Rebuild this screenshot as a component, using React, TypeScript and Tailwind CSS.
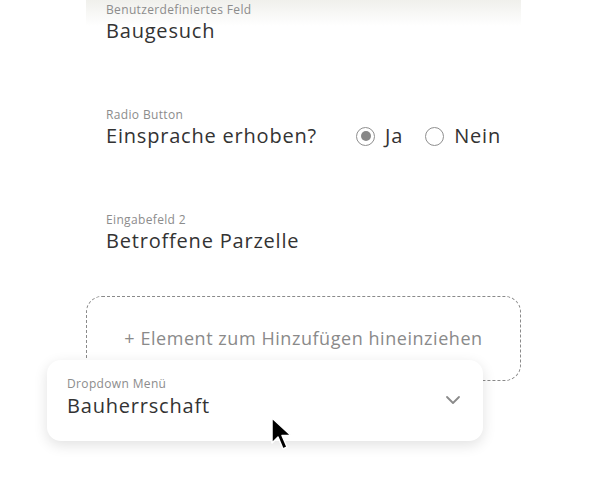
import React from 'react';

const font = { fontFamily: '"Open Sans", "Noto Sans", sans-serif' };

function Field({ label, value, children }: { label: string; value: string; children?: React.ReactNode }) {
  return (
    <div className="px-5">
      <p className="text-[12px] leading-[15px] tracking-[0.35px] text-[#8c8c8c]">{label}</p>
      <div className="flex items-center justify-between">
        <p className="text-[20px] leading-[28px] tracking-[0.8px] text-[#333333]">{value}</p>
        {children}
      </div>
    </div>
  );
}

function Radio({ checked, label }: { checked?: boolean; label: string }) {
  return (
    <div className="flex items-center gap-[10px]">
      <span className="flex h-[19px] w-[19px] items-center justify-center rounded-full border border-[#8f8f8f]">
        {checked && <span className="h-[10px] w-[10px] rounded-full bg-[#888888]" />}
      </span>
      <span className="text-[20px] leading-[28px] tracking-[0.8px] text-[#333333]">{label}</span>
    </div>
  );
}

export default function App() {
  return (
    <div className="relative h-[500px] w-[607px] overflow-hidden bg-white" style={font}>
      <div className="ml-[86px] flex w-[435px] flex-col">
        <div className="h-[105px] bg-[linear-gradient(to_bottom,#f0f0ec,#ffffff_26px)] pt-[2px]">
          <Field label="Benutzerdefiniertes Feld" value="Baugesuch" />
        </div>
        <div className="h-[105px] pt-[2px]">
          <Field label="Radio Button" value="Einsprache erhoben?">
            <div className="flex items-center gap-[22px]">
              <Radio checked label="Ja" />
              <Radio label="Nein" />
            </div>
          </Field>
        </div>
        <div className="h-[86px] pt-[2px]">
          <Field label="Eingabefeld 2" value="Betroffene Parzelle" />
        </div>
        <div className="flex h-[85px] items-center justify-center rounded-[16px] border border-dashed border-[#8a8a8a]">
          <p className="text-[18px] tracking-[0.55px] text-[#8a8a8a]">+ Element zum Hinzufügen hineinziehen</p>
        </div>
      </div>

      {/* dragged dropdown item */}
      <div className="absolute left-[47px] top-[360px] flex h-[81px] w-[436px] items-start justify-between rounded-[14px] bg-white pl-5 pr-[22px] pt-[16px] shadow-[0_4px_14px_rgba(0,0,0,0.12)]">
        <div className="flex flex-col">
          <p className="text-[12px] leading-[16px] tracking-[0.35px] text-[#8c8c8c]">Dropdown Menü</p>
          <p className="text-[20px] leading-[28px] tracking-[0.8px] text-[#333333]">Bauherrschaft</p>
        </div>
        <svg width="16" height="10" viewBox="0 0 16 10" fill="none" className="mt-[19px]">
          <path d="M2 2l6 6 6-6" stroke="#8a8a8a" strokeWidth="1.8" strokeLinecap="round" strokeLinejoin="round" />
        </svg>
      </div>

      <svg className="absolute left-[270px] top-[416px]" width="28" height="38" viewBox="0 0 28 38">
        <path d="M2 2 L2 27 L8 21 L13 33 L17 31 L12 19.5 L21 19.5 Z" fill="#000" stroke="#fff" strokeWidth="1.5" strokeLinejoin="round" />
      </svg>
    </div>
  );
}
